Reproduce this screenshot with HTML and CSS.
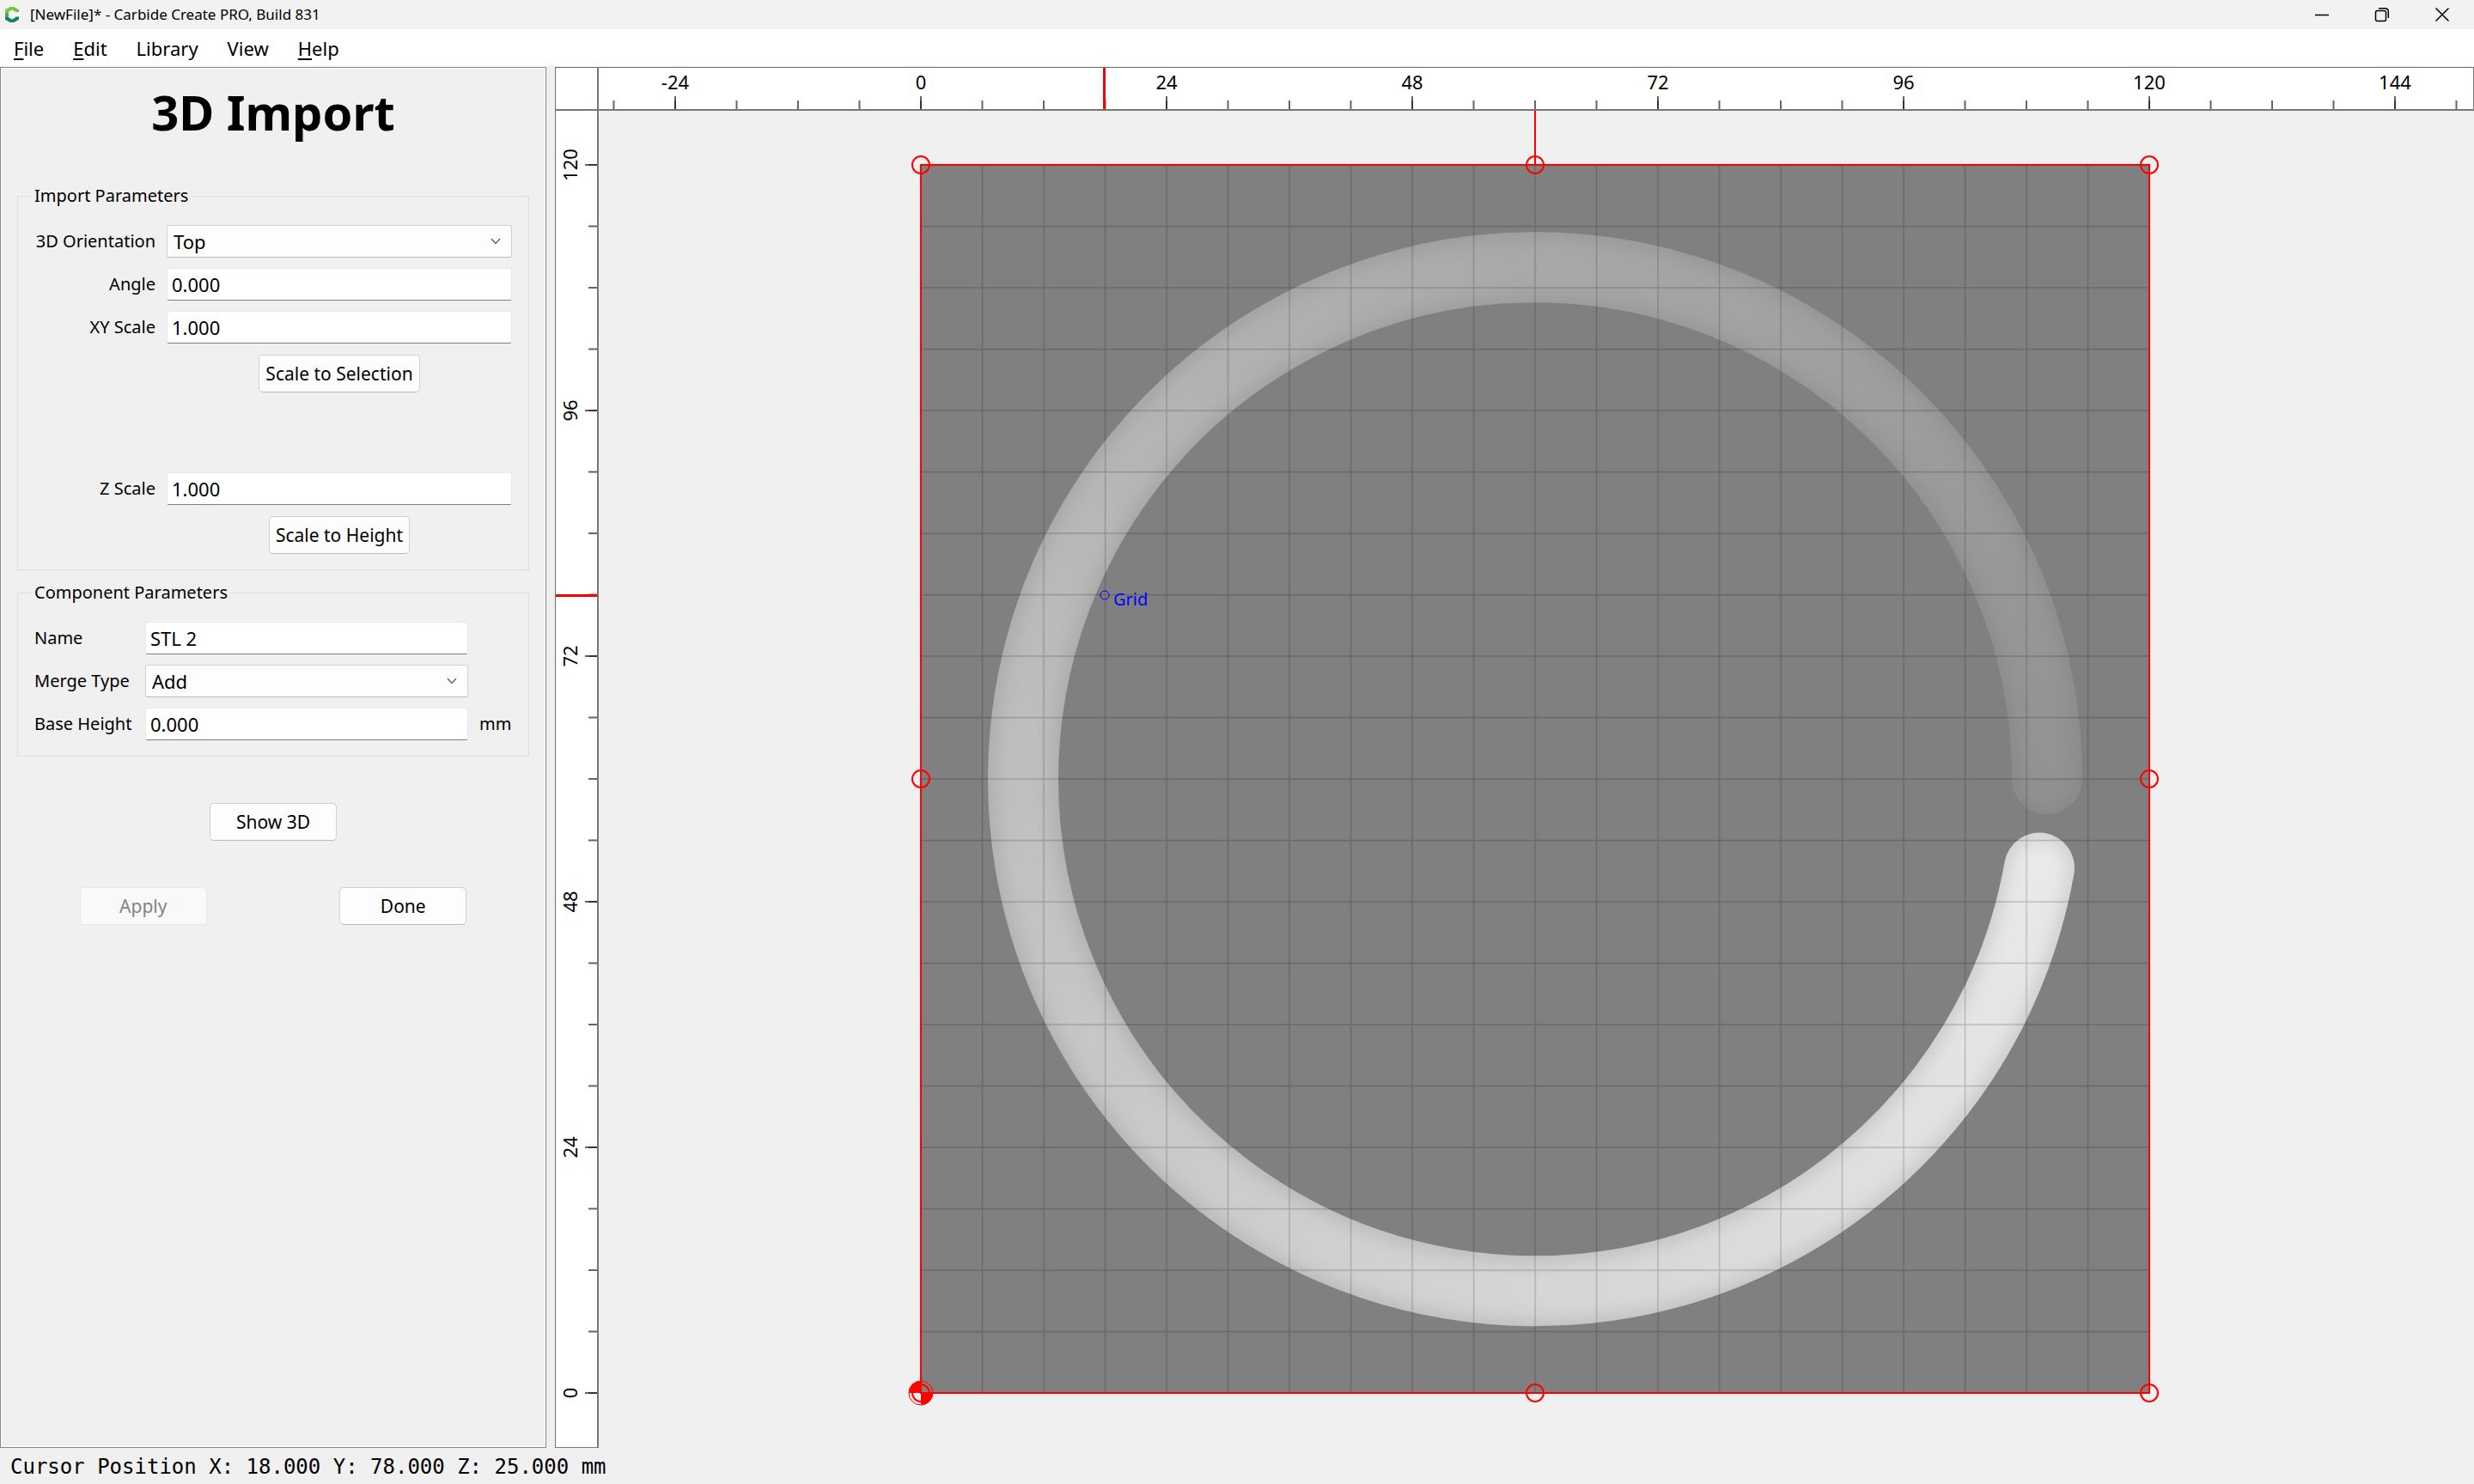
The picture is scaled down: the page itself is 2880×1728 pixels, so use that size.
FILE: index.html
```html
<!DOCTYPE html>
<html lang="en">
<head>
<meta charset="utf-8">
<title>[NewFile]* - Carbide Create PRO, Build 831</title>
<link rel="stylesheet" href="styles.css">
</head>
<body>
<header class="titlebar">
  <svg class="app-icon" width="16" height="18" viewBox="0 0 16 18" aria-hidden="true">
    <path d="M14 6V4.500L8 1 2 4.500V9" fill="none" stroke="#7cc142" stroke-width="4"/>
    <path d="M2 8.500V13.500L8 17 14 13.500V11.500" fill="none" stroke="#11835a" stroke-width="4"/>
    <path d="M2 7.500V12" stroke="#3fae49" stroke-width="4"/>
  </svg>
  <span class="window-title">[NewFile]* - Carbide Create PRO, Build 831</span>
  <div class="window-controls">
    <button type="button" aria-label="Minimize"><svg width="18" height="18" viewBox="0 0 18 18"><path d="M1 9.500H17"/></svg></button>
    <button type="button" aria-label="Restore"><svg width="18" height="18" viewBox="0 0 18 18"><rect x="1.500" y="4.500" width="12" height="12" rx="2"/><path d="M5 1.700H12.500Q16.300 1.700 16.300 5.500V13"/></svg></button>
    <button type="button" aria-label="Close"><svg width="18" height="18" viewBox="0 0 18 18"><path d="M1.500 1.500 16.500 16.500M16.500 1.500 1.500 16.500"/></svg></button>
  </div>
</header>
<nav class="menubar">
  <button type="button"><u>F</u>ile</button>
  <button type="button"><u>E</u>dit</button>
  <button type="button">Library</button>
  <button type="button">View</button>
  <button type="button"><u>H</u>elp</button>
</nav>
<main class="workspace">
  <form class="panel">
    <h1>3D Import</h1>
    <fieldset>
      <legend>Import Parameters</legend>
      <div class="form import-form">
        <label for="orientation">3D Orientation</label>
        <div class="select-box">
          <select id="orientation"><option>Top</option><option>Front</option></select>
          <svg class="chevron" width="12" height="8" viewBox="0 0 12 8"><path d="M1 1 6 6.500 11 1"/></svg>
        </div>
        <label for="angle">Angle</label>
        <input id="angle" type="text" value="0.000">
        <label for="xyscale">XY Scale</label>
        <input id="xyscale" type="text" value="1.000">
        <button class="push fit" type="button">Scale to Selection</button>
        <div class="spacer"></div>
        <label for="zscale">Z Scale</label>
        <input id="zscale" type="text" value="1.000">
        <button class="push fit" type="button">Scale to Height</button>
      </div>
    </fieldset>
    <fieldset>
      <legend>Component Parameters</legend>
      <div class="form component-form">
        <label for="name">Name</label>
        <input id="name" type="text" value="STL 2">
        <label for="merge">Merge Type</label>
        <div class="select-box">
          <select id="merge"><option>Add</option><option>Subtract</option></select>
          <svg class="chevron" width="12" height="8" viewBox="0 0 12 8"><path d="M1 1 6 6.500 11 1"/></svg>
        </div>
        <label for="base">Base Height</label>
        <input id="base" type="text" value="0.000">
        <span class="unit">mm</span>
      </div>
    </fieldset>
    <div class="actions">
      <button class="push" type="button">Show 3D</button>
    </div>
    <div class="actions pair">
      <button class="push" type="button" disabled>Apply</button>
      <button class="push" type="button">Done</button>
    </div>
  </form>

  <section class="viewport" aria-label="Design view">
    <div class="corner"></div>
    <svg class="ruler ruler-x">
      <defs>
        <pattern id="xminor" x="16.500" y="0" width="71.500" height="48" patternUnits="userSpaceOnUse"><path d="M1 38V48" stroke="#222" stroke-width="1.400"/></pattern>
        <pattern id="xmajor" x="88" y="0" width="286" height="48" patternUnits="userSpaceOnUse"><path d="M1 33V48" stroke="#222" stroke-width="1.400"/></pattern>
      </defs>
      <rect width="100%" height="48" fill="url(#xminor)"/>
      <rect width="100%" height="48" fill="url(#xmajor)"/>
      <g class="ticks">
        <text x="89" y="25">-24</text><text x="375" y="25">0</text><text x="661" y="25">24</text><text x="947" y="25">48</text>
        <text x="1233" y="25">72</text><text x="1519" y="25">96</text><text x="1805" y="25">120</text><text x="2091" y="25">144</text>
      </g>
      <path class="marker" d="M588.500 0V50"/>
    </svg>
    <svg class="ruler ruler-y">
      <defs>
        <pattern id="yminor" x="0" y="62" width="48" height="71.500" patternUnits="userSpaceOnUse"><path d="M38 1H48" stroke="#222" stroke-width="1.400"/></pattern>
        <pattern id="ymajor" x="0" y="62" width="48" height="286" patternUnits="userSpaceOnUse"><path d="M34 1H48" stroke="#222" stroke-width="1.400"/></pattern>
      </defs>
      <rect y="60" width="48" height="1440" fill="url(#yminor)"/>
      <rect y="60" width="48" height="1440" fill="url(#ymajor)"/>
      <g class="ticks">
        <text transform="translate(25 63) rotate(-90)">120</text>
        <text transform="translate(25 349) rotate(-90)">96</text>
        <text transform="translate(25 635) rotate(-90)">72</text>
        <text transform="translate(25 921) rotate(-90)">48</text>
        <text transform="translate(25 1207) rotate(-90)">24</text>
        <text transform="translate(25 1493) rotate(-90)">0</text>
      </g>
      <path class="marker" d="M0 564.500H50"/>
    </svg>
    <svg class="canvas">
      <defs>
        <pattern id="grid" x="374.300" y="62.300" width="71.500" height="71.500" patternUnits="userSpaceOnUse"><path d="M0 .7H71.500M.7 0V71.500" stroke="#000" stroke-width="1.400"/></pattern>
        <!-- Arc runs counter-clockwise from 0 to 350 degrees -->
        <mask id="arc" maskUnits="userSpaceOnUse" x="440" y="128" width="1300" height="1300">
          <path d="M1686 778A596 596 0 1 0 1677 881.500" fill="none" stroke="#fff" stroke-width="82" stroke-linecap="round"/>
        </mask>
        <filter id="soften" x="-5%" y="-5%" width="110%" height="110%"><feGaussianBlur stdDeviation="9"/></filter>
        <mask id="shade" maskUnits="userSpaceOnUse" x="440" y="128" width="1300" height="1300">
          <rect x="440" y="128" width="1300" height="1300" fill="#fff"/>
          <path d="M1686 778A596 596 0 1 0 1677 881.500" fill="none" stroke="#000" stroke-width="66" stroke-linecap="round" filter="url(#soften)"/>
        </mask>
      </defs>
      <rect x="375" y="63" width="1430" height="1430" fill="#808080"/>
      <g mask="url(#arc)">
        <foreignObject x="440" y="128" width="1300" height="1300"><div class="height-map"></div></foreignObject>
        <rect x="440" y="128" width="1300" height="1300" fill="#666" fill-opacity=".18" mask="url(#shade)"/>
      </g>
      <rect x="375" y="63" width="1430" height="1430" fill="url(#grid)" opacity=".19"/>
      <g class="selection">
        <rect x="375" y="63" width="1430" height="1430"/>
        <path d="M1090 0V63"/>
        <circle cx="375" cy="63" r="10"/><circle cx="1090" cy="63" r="10"/><circle cx="1805" cy="63" r="10"/>
        <circle cx="375" cy="778" r="10"/><circle cx="1805" cy="778" r="10"/>
        <circle cx="375" cy="1493" r="10"/><circle cx="1090" cy="1493" r="10"/><circle cx="1805" cy="1493" r="10"/>
      </g>
      <g class="origin">
        <circle cx="375" cy="1493" r="14"/>
        <path d="M375 1493V1479A14 14 0 0 0 361 1493ZM375 1493V1507A14 14 0 0 0 389 1493Z"/>
      </g>
      <circle class="snap" cx="589" cy="564" r="5"/>
      <text class="snap-label" x="599" y="576">Grid</text>
    </svg>
  </section>
</main>
<footer class="statusbar">Cursor Position X: 18.000 Y: 78.000 Z: 25.000 mm</footer>
</body>
</html>
```
FILE: styles.css
```css
* { box-sizing: border-box; }
html, body { height: 100%; }
body {
  margin: 0;
  display: flex;
  flex-direction: column;
  background: #f0f0f0;
  color: #000;
  font: 22px/30px "Noto Sans", sans-serif;
}
button, input, select { font: inherit; color: inherit; margin: 0; }

.titlebar { display: flex; align-items: center; height: 34px; padding: 0 2px 0 6px; background: #f2f2f2; }
.app-icon { margin-right: 13px; }
.window-title { font-size: 17px; }
.window-controls { display: flex; margin-left: auto; }
.window-controls button {
  display: flex; align-items: center; justify-content: center;
  width: 70px; height: 34px; padding: 0; border: 0; background: none;
}
.window-controls svg { fill: none; stroke: #000; stroke-width: 1.500; }

.menubar { display: flex; gap: 34px; height: 43px; padding: 0 16px; background: #fff; align-items: center; }
.menubar button { padding: 0; border: 0; background: none; }
.menubar u { text-decoration-thickness: 2px; text-underline-offset: 3px; }

.workspace { flex: 1; display: flex; gap: 10px; min-height: 0; padding-top: 1px; }

.panel {
  flex: 0 0 636px;
  padding: 12px 19px;
  border: 1px solid #828790;
  outline: 1px solid #fff;
  outline-offset: -2px;
}
h1 { margin: 0 0 44px; text-align: center; font-size: 56px; line-height: 78px; font-weight: 700; }
fieldset { min-width: 0; margin: 0 0 11px; padding: 19px 19px 18px; border: 1px solid #dcdcdc; }
legend { margin-left: -4px; padding: 0 4px; font-size: 20px; }
.form { display: grid; gap: 12px 13px; align-items: center; }
.form label { font-size: 20px; white-space: nowrap; }
.import-form { grid-template-columns: 141px 1fr; }
.import-form label { text-align: right; }
.component-form { grid-template-columns: 116px 1fr 38px; }
.component-form label { grid-column: 1; }
.form input, .form select {
  width: 100%; height: 38px; border: 1px solid #e8e8e8; border-radius: 3px; background: #fff; outline: none;
}
.form input { padding: 0 5px; border-bottom: 1px solid #7d7d7d; }
.form select { appearance: none; padding: 0 7px; border-color: #d0d0d0 #d0d0d0 #b9b9b9; background: #fdfdfd; }
.select-box { position: relative; height: 38px; }
.chevron { position: absolute; right: 13px; top: 15px; fill: none; stroke: #666; stroke-width: 1.500; pointer-events: none; }
.push {
  height: 44px; padding: 0 7px; background: #fdfdfd; font-size: 21px;
  border: 1px solid #d0d0d0; border-bottom-color: #b9b9b9; border-radius: 5px;
}
.push:disabled { color: #838383; background: #f9f9f9; border-color: #e8e8e8; }
.fit { grid-column: 2; justify-self: center; margin-top: 1px; }
.spacer { grid-column: 1 / -1; height: 69px; }
.unit { font-size: 20px; }
.actions { display: grid; justify-items: center; margin-top: 54px; }
.actions .push { width: 148px; }
.pair { grid-template-columns: 1fr 1fr; column-gap: 9px; }

.viewport {
  flex: 1; min-width: 0;
  display: grid; grid-template-columns: 50px 1fr; grid-template-rows: 50px 1fr;
  border-top: 1px solid #707070; border-left: 1px solid #707070;
}
.viewport > svg { display: block; width: 100%; height: 100%; }
.corner, .ruler { background: #fff; }
.corner, .viewport > .ruler-y { border-right: 2px solid #777; }
.corner, .viewport > .ruler-x { border-bottom: 2px solid #777; }
.viewport > .ruler-x { border-right: 1px solid #777; }
.viewport > .ruler-y { border-bottom: 1px solid #777; }
.ticks { text-anchor: middle; }
.marker { stroke: #f00; stroke-width: 3; }
.height-map {
  height: 1300px;
  background: conic-gradient(from 90deg, #919191 0deg 5deg, #e9e9e9 5deg 10deg, #929292 360deg);
}
.selection { fill: none; stroke: #f00; stroke-width: 2; }
.origin { fill: #f00; }
.origin circle { fill: none; stroke: #f00; }
.snap { fill: none; stroke: #00f; }
.snap-label { fill: #00f; font-size: 20px; }

.statusbar { height: 42px; padding: 0 12px; font: 24px/44px "DejaVu Sans Mono", monospace; }
```
